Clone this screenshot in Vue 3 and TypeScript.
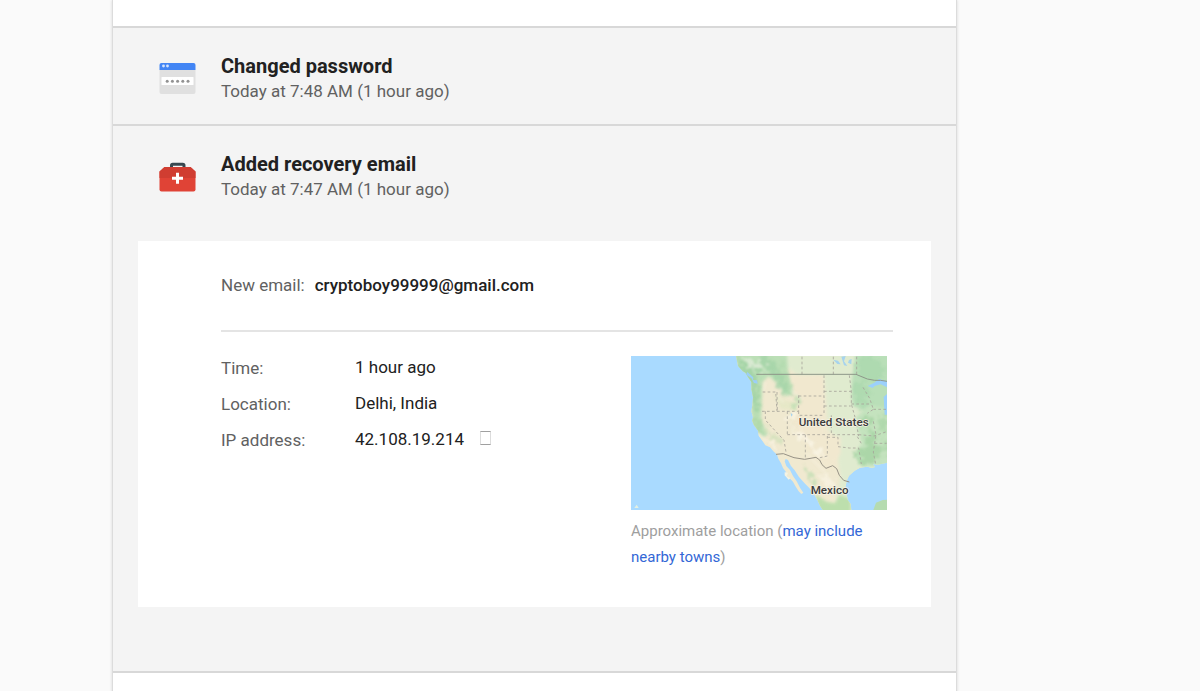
<script setup lang="ts">
interface Detail {
  label: string
  value: string
  copyable?: boolean
}

const details: Detail[] = [
  { label: 'Time:', value: '1 hour ago' },
  { label: 'Location:', value: 'Delhi, India' },
  { label: 'IP address:', value: '42.108.19.214', copyable: true },
]
</script>

<template>
  <main class="page">
    <div class="card">
      <div class="strip"></div>

      <section class="event">
        <header class="event-head">
          <svg class="icon" viewBox="0 0 36 36" aria-hidden="true">
            <path d="M0 10h36v22a2 2 0 0 1-2 2H2a2 2 0 0 1-2-2z" fill="#e0e0e0" />
            <path d="M2 3h32a2 2 0 0 1 2 2v5H0V5a2 2 0 0 1 2-2z" fill="#4285f4" />
            <circle cx="4" cy="6" r="1.4" fill="#d5e4fd" />
            <circle cx="8" cy="6" r="1.4" fill="#d5e4fd" />
            <rect x="2" y="17" width="32" height="8" rx="0.5" fill="#fff" />
            <g fill="#929292">
              <circle cx="7.7" cy="21.2" r="1.5" />
              <circle cx="12.9" cy="21.2" r="1.5" />
              <circle cx="18.1" cy="21.2" r="1.5" />
              <circle cx="23.3" cy="21.2" r="1.5" />
              <circle cx="28.5" cy="21.2" r="1.5" />
            </g>
          </svg>
          <div>
            <h2>Changed password</h2>
            <p>Today at 7:48 AM (1 hour ago)</p>
          </div>
        </header>
      </section>

      <section class="event">
        <header class="event-head">
          <svg class="icon" viewBox="0 0 36 36" aria-hidden="true">
            <path d="M12 9.500V7.500Q12 6.200 13.200 6.200H23.300Q24.500 6.200 24.500 7.500V9.500" fill="none" stroke="#37474f" stroke-width="3" />
            <path d="M5 9H31L36 13.500V31.500a2 2 0 0 1-2 2H2a2 2 0 0 1-2-2V13.500z" fill="#e04336" />
            <path d="M5 9H31L36 13.500V20H0V13.500z" fill="#d03d31" />
            <path d="M16.500 14.700h3v4h4v3h-4v4h-3v-4h-4v-3h4z" fill="#fff" />
          </svg>
          <div>
            <h2>Added recovery email</h2>
            <p>Today at 7:47 AM (1 hour ago)</p>
          </div>
        </header>

        <div class="panel">
          <div class="email">
            <span class="label">New email:</span>
            <strong>cryptoboy99999@gmail.com</strong>
          </div>

          <div class="columns">
            <dl>
              <div v-for="d in details" :key="d.label" class="row">
                <dt>{{ d.label }}</dt>
                <dd>
                  {{ d.value }}
                  <button v-if="d.copyable" type="button" class="glyph" aria-label="IP address details"></button>
                </dd>
              </div>
            </dl>

            <figure>
              <svg class="map" viewBox="21 18 768 462" role="img" aria-label="Map of the western United States">
                <defs>
                  <filter id="soft" x="-10%" y="-10%" width="120%" height="120%" color-interpolation-filters="sRGB">
                    <feGaussianBlur stdDeviation="5" />
                  </filter>
                  <filter id="rough" x="-10%" y="-10%" width="120%" height="120%" color-interpolation-filters="sRGB">
                    <feTurbulence type="fractalNoise" baseFrequency="0.06" numOctaves="3" seed="4" result="n" />
                    <feDisplacementMap in="SourceGraphic" in2="n" scale="48" xChannelSelector="R" yChannelSelector="G" result="d" />
                    <feGaussianBlur in="d" stdDeviation="2.5" />
                  </filter>
                  <clipPath id="land">
                    <path d="M336 18L342 48L356 64L364 68L372 82L382 96L382 118L387 142L385 165L382 184L387 202L384 212L390 226L402 242L404 257L418 277L424 286L438 292L448 304L459 314L463 326L471 340L477 354L486 366L484 376L497 385L507 395L514 408L524 424L532 432L538 428L528 413L518 394L507 378L498 360L487 348L482 334L485 327L492 330L501 348L512 361L525 381L541 399L556 414L568 430L579 448L587 466L596 480H682L680 462L671 450L668 430L664 414L668 392L675 377L692 362L708 353L730 350L744 354L753 351L747 342L762 344L789 338V18Z" />
                  </clipPath>
                </defs>
                <rect x="21" y="18" width="768" height="462" fill="#a9daff" />
                <g clip-path="url(#land)">
                  <rect x="300" y="18" width="489" height="462" fill="#f0e9d0" />
                  <g filter="url(#soft)">
                    <path d="M488 10H800V480H630L650 380L642 330L650 270L612 240L604 120L600 76L520 74L490 50Z" fill="#e0ebcf" />
                    <path d="M500 76H598V260H650V310L620 360L560 310L510 230Z" fill="#f1e8cf" />
                    <path d="M695 10H800V190H735L685 166L684 90Z" fill="#b9dfb8" />
                    <path d="M694 205L735 165L800 175V350H714L692 318L712 280Z" fill="#c4e3be" />
                    <path d="M320 10H488L494 75L508 128L486 140L464 104L434 78L416 96L411 210L432 256L416 260L384 228L380 120L345 72Z" fill="#bbdfb6" />
                    <path d="M574 432L608 455L633 460L646 435L680 446V490H585Z" fill="#bddfad" />
                    <path d="M448 130L486 152L520 160L516 182L470 176Z" fill="#e6e8c7" />
                  </g>
                  <g filter="url(#rough)" opacity="0.65">
                    <path d="M340 22L390 48L405 72L396 110L404 184L388 190L378 94L346 54Z" fill="#9bcfa0" />
                    <path d="M404 18L444 22L462 58L480 78L492 120L512 136L498 140L464 118L452 72L420 52Z" fill="#9fd1a5" />
                    <path d="M357 22L390 25L414 44L428 60L394 63L372 44Z" fill="#e7eee0" />
                    <path d="M470 30L490 84L506 128L494 130L480 92L462 54Z" fill="#b1d9ad" />
                    <path d="M514 135L528 149L520 181L504 180Z" fill="#b9ddb0" />
                    <path d="M424 210L438 241L466 263L480 275L466 278L438 260Z" fill="#c9dfb4" />
                    <path d="M388 190L406 224L421 249L408 250L390 222Z" fill="#abd5a2" />
                    <path d="M489 198L510 190L516 203L500 211L512 236L549 259L570 281L604 318L582 320L548 276L522 262Z" fill="#fcf9ec" />
                    <path d="M548 352L565 376L578 402L566 403L538 360Z" fill="#b9dcae" />
                    <path d="M583 378L612 382L639 403L625 410L590 394Z" fill="#faf5e6" />
                    <path d="M424 258L452 278L464 296L442 286Z" fill="#fbf6e8" />
                    <path d="M705 22H760L784 60L765 92L721 90L702 62Z" fill="#a8d7ac" />
                    <path d="M684 100L717 98L746 134L717 142L737 165L710 174L692 150Z" fill="#a9d7ac" />
                    <path d="M703 214L748 195L729 228L764 246L748 284L778 294L759 334L711 343L697 304L728 290L717 260L742 245Z" fill="#9fd09d" />
                    <path d="M764 198H789V247L769 252ZM780 271L789 276V310L777 302Z" fill="#a7d4a5" />
                  </g>
                  <g fill="none" stroke="#fff8ea" stroke-width="4" opacity="0.6" filter="url(#soft)">
                    <path d="M424 94L418 124M462 140L480 160M500 120L535 148M526 230L552 280M402 252L430 276M548 310L604 366" />
                  </g>
                  <g fill="#a6d3ee">
                    <path d="M628 29L642 32L650 43L640 42ZM652 20L665 18L660 34L670 48L660 46ZM675 30L683 27L682 43L672 38ZM500 188L506 194L502 200Z" />
                  </g>
                  <path d="M370 66L388 82L387 90L399 91L401 101L390 99L382 84L366 74Z" fill="#9ccff5" />
                  <path d="M731 108L751 98L765 87L789 94V112L770 103L752 108L746 114ZM779 141L789 132V194H782Z" fill="#9bd0fb" />
                </g>
                <path d="M482 367L492 368L488 378L499 385L494 389L482 376Z" fill="#f4f3e4" />
                <path d="M748 480L756 458L776 450L789 449V480Z" fill="#b5dbb0" />
                <path d="M31 474L38 464L44 474Z" fill="#e3f0e2" />
                <g fill="none" stroke="#a5a198" stroke-width="3" stroke-dasharray="8 7" opacity="0.8">
                  <path d="M534 20V73M628 20V73M698 20V73M416 126L455 126L459 184M414 184H524V136M424 184V210L480 271L486 306M490 184V252M459 126L460 184M524 138H600M600 76V195M600 124H682M600 168H680M524 184V196H600M490 254H704M544 254V326M610 258V318L584 324M622 196V254M610 262H642V290L676 294L704 294L712 342M676 76L682 124V162L694 205L704 258M682 162H738M717 112L737 145L748 178L730 190M748 178H786M748 214L756 254L748 306L755 344M704 254L750 258L785 246M752 280H788M700 260L714 284" />
                </g>
                <path d="M397 73H696L730 87L752 91L770 91L789 94" fill="none" stroke="#8d9789" stroke-width="3" />
                <path d="M456 313L478 311L510 323L542 328L576 322L587 330L594 344L606 355L626 347L638 356L646 376L659 391L676 396" fill="none" stroke="#979286" stroke-width="3" />
                <g class="place">
                  <text x="629" y="229">United States</text>
                  <text x="617" y="433">Mexico</text>
                </g>
              </svg>
              <figcaption>Approximate location (<a href="#">may include nearby towns</a>)</figcaption>
            </figure>
          </div>
        </div>
      </section>

      <div class="strip last"></div>
    </div>
  </main>
</template>

<style>
body {
  margin: 0;
  background: #fafafa;
  overflow: hidden;
}
</style>

<style scoped>
.page {
  padding: 0 243px 0 112px;
  font: 17px/24px Roboto, "Liberation Sans", sans-serif;
  color: #212121;
}
.card {
  border: solid #dcdcdc;
  border-width: 0 1px;
  box-shadow: 0 0 3px rgba(0, 0, 0, 0.14);
  background: #fff;
}
.strip {
  height: 26px;
}
.strip.last {
  height: 20px;
  border-top: 2px solid #d8d8d8;
}
.event {
  border-top: 2px solid #d8d8d8;
  background: #f4f4f4;
}
.event + .event {
  padding-bottom: 64px;
}
.event-head {
  display: flex;
  align-items: center;
  gap: 25px;
  padding: 24px 46px 20px;
}
.icon {
  width: 37px;
  height: 36px;
}
h2 {
  margin: 0;
  font-size: 20px;
  line-height: 28px;
  font-weight: 700;
}
p {
  margin: 0;
  line-height: 23px;
  padding-bottom: 1px;
  color: #616161;
}
.panel {
  margin: 19px 25px 0;
  padding: 32px 38px 37px 83px;
  background: #fff;
}
.email {
  display: flex;
  gap: 10px;
  padding-bottom: 33px;
  border-bottom: 2px solid #e4e4e4;
}
.email strong {
  font-weight: 500;
}
.label,
dt {
  color: #616161;
}
.columns {
  display: flex;
  justify-content: space-between;
  padding: 24px 6px 0 0;
}
dl {
  margin: 0;
  display: grid;
  gap: 12px;
  align-content: start;
}
.row {
  display: grid;
  grid-template-columns: 134px auto;
}
dd {
  margin: 0;
  line-height: 22px;
  display: flex;
  align-items: flex-start;
  gap: 16px;
}
.glyph {
  width: 11px;
  height: 14px;
  margin-top: 3px;
  padding: 0;
  border: 1px solid #a0a0a0;
  border-left-color: #dcdcdc;
  border-right-color: #dcdcdc;
  background: #fff;
}
figure {
  margin: 0;
  width: 256px;
}
.map {
  display: block;
  width: 256px;
  height: 154px;
}
.place {
  font: 500 35px Roboto, "Liberation Sans", sans-serif;
  text-anchor: middle;
  fill: #3c3c3c;
  stroke: #f6f2e4;
  stroke-width: 4px;
  paint-order: stroke;
}
figcaption {
  margin-top: 8px;
  font-size: 15px;
  line-height: 26px;
  color: #9e9e9e;
}
a {
  color: #3367d6;
  text-decoration: none;
}
</style>
